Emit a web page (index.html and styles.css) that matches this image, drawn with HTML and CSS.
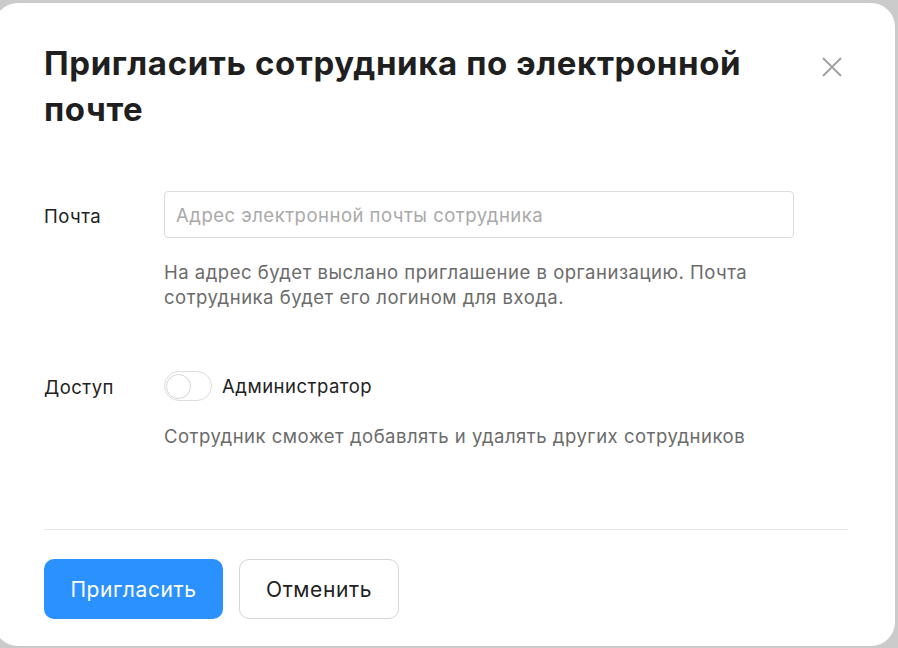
FILE: index.html
```html
<!DOCTYPE html>
<html lang="ru">
<head>
<meta charset="utf-8">
<title>Пригласить сотрудника</title>
<link rel="stylesheet" href="styles.css">
</head>
<body>
<div class="modal">
  <div class="modal-head">
    <h1 class="title">Пригласить сотрудника по электронной почте</h1>
    <button class="close" aria-label="Закрыть">
      <svg width="20" height="20" viewBox="0 0 20 20"><path d="M1 1L19 19M19 1L1 19" stroke="#a3a3a3" stroke-width="2" fill="none"/></svg>
    </button>
  </div>

  <div class="row row-email">
    <div class="label">Почта</div>
    <div class="field">
      <input class="input" type="text" placeholder="Адрес электронной почты сотрудника">
      <p class="hint">На адрес будет выслано приглашение в организацию. Почта сотрудника будет его логином для входа.</p>
    </div>
  </div>

  <div class="row row-access">
    <div class="label">Доступ</div>
    <div class="field">
      <label class="switch-line">
        <span class="switch"><span class="knob"></span></span>
        <span class="switch-text">Администратор</span>
      </label>
      <p class="hint">Сотрудник сможет добавлять и удалять других сотрудников</p>
    </div>
  </div>

  <div class="divider"></div>

  <div class="actions">
    <button class="btn btn-primary">Пригласить</button>
    <button class="btn btn-secondary">Отменить</button>
  </div>
</div>
</body>
</html>
```
FILE: styles.css
```css
html, body {
  margin: 0;
  padding: 0;
  background: #cbcbcb;
  overflow: hidden;
  width: 898px;
  height: 648px;
}
body {
  font-family: Inter, "Noto Sans", sans-serif;
  color: #222;
  letter-spacing: 0.5px;
}
.modal {
  box-sizing: border-box;
  margin-top: 3px;
  margin-left: -6px;
  width: 901px;
  height: 643px;
  background: #fff;
  border-radius: 24px;
  padding: 37px 47px 0 50px;
  display: flex;
  flex-direction: column;
}
.modal-head {
  display: flex;
  justify-content: space-between;
  align-items: flex-start;
}
.title {
  margin: 0;
  width: 760px;
  font-size: 33px;
  line-height: 46px;
  font-weight: 700;
  color: #1f1f1f;
  letter-spacing: 0.6px;
}
.close {
  margin: 17px 6px 0 0;
  padding: 0;
  border: 0;
  background: none;
  width: 20px;
  height: 20px;
  display: block;
}
.close svg { display: block; }
.row {
  display: grid;
  grid-template-columns: 120px 630px;
}
.row-email { margin-top: 59px; }
.row-access { margin-top: 61px; }
.label {
  font-size: 18.5px;
  line-height: 24px;
  color: #222;
}
.row-email .label { padding-top: 13px; }
.row-access .label { padding-top: 4px; }
.input {
  box-sizing: border-box;
  display: block;
  width: 630px;
  height: 47px;
  border: 1px solid #dcdcdc;
  border-radius: 4px;
  padding: 0 11px;
  font-family: inherit;
  font-size: 18.5px;
  letter-spacing: 0.5px;
  color: #222;
  outline: none;
}
.input::placeholder { color: #a9a9a9; }
.hint {
  margin: 22px 0 0;
  font-size: 18.5px;
  line-height: 25px;
  color: #6b6b6b;
  width: 620px;
}
.switch-line {
  display: flex;
  align-items: center;
  gap: 10px;
  height: 30px;
}
.switch {
  box-sizing: border-box;
  width: 48px;
  height: 30px;
  border: 1.5px solid #dcdcdc;
  border-radius: 15px;
  padding: 1px;
  display: flex;
  align-items: center;
}
.knob {
  box-sizing: border-box;
  width: 25px;
  height: 25px;
  border-radius: 50%;
  border: 1.5px solid #d6d6d6;
  background: #fff;
}
.switch-text {
  font-size: 18.5px;
  color: #222;
}
.row-access .hint { margin-top: 23px; }
.divider {
  height: 1px;
  background: #e6e6e6;
  margin-top: 80px;
  width: 804px;
}
.actions {
  display: flex;
  gap: 16px;
  margin-top: 29px;
}
.btn {
  box-sizing: border-box;
  height: 60px;
  border-radius: 10px;
  font-family: inherit;
  font-size: 21px;
  letter-spacing: 0.6px;
  padding: 0;
}
.btn-primary {
  width: 179px;
  background: #2b91ff;
  border: 0;
  color: #fff;
}
.btn-secondary {
  width: 160px;
  background: #fff;
  border: 1.5px solid #d6d6d6;
  color: #222;
}
```
